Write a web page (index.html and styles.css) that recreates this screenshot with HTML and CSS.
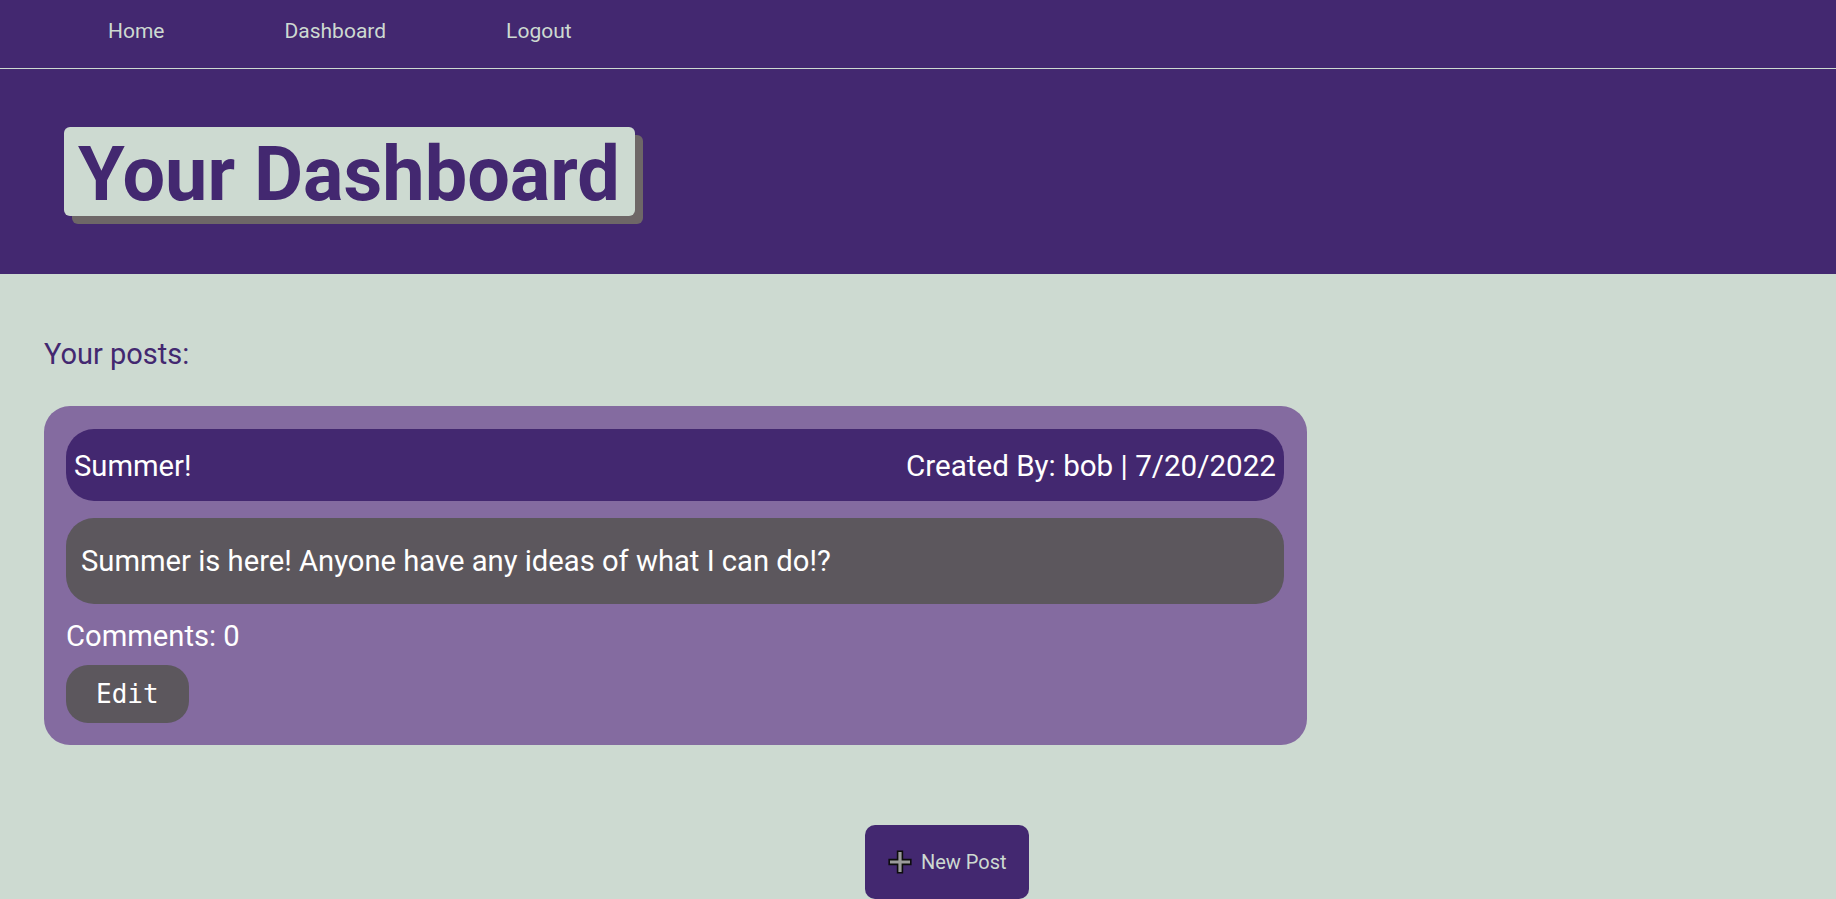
FILE: index.html
```html
<!DOCTYPE html>
<html lang="en">
<head>
<meta charset="utf-8">
<title>Your Dashboard</title>
<link rel="stylesheet" href="styles.css">
</head>
<body>
  <nav class="topnav">
    <a class="nav-link" href="#">Home</a>
    <a class="nav-link" href="#">Dashboard</a>
    <a class="nav-link" href="#">Logout</a>
  </nav>
  <header class="hero">
    <h1 class="hero-title">Your Dashboard</h1>
  </header>
  <main class="main">
    <h2 class="section-label">Your posts:</h2>
    <article class="post-card">
      <div class="post-head">
        <span class="post-title">Summer!</span>
        <span class="post-meta">Created By: bob | 7/20/2022</span>
      </div>
      <div class="post-body">Summer is here! Anyone have any ideas of what I can do!?</div>
      <div class="post-comments">Comments: 0</div>
      <button class="edit-btn">Edit</button>
    </article>
    <div class="actions">
      <button class="new-post-btn">
        <svg class="plus-icon" width="24" height="24" viewBox="0 0 24 24" aria-hidden="true">
          <path d="M9.6 1.2h4.8v8.4h8.4v4.8h-8.4v8.4H9.6v-8.4H1.2V9.6h8.4z" fill="#9b9b9b" stroke="#0d0d0d" stroke-width="1.6" stroke-linejoin="miter"/>
        </svg>
        <span>New Post</span>
      </button>
    </div>
  </main>
</body>
</html>
```

FILE: styles.css
```css
html, body {
  margin: 0;
  padding: 0;
}

body {
  background: #cddad1;
  font-family: Roboto, "Liberation Sans", sans-serif;
  overflow: hidden;
}

.topnav {
  display: flex;
  align-items: center;
  gap: 120px;
  height: 68px;
  padding-left: 108px;
  background: #432870;
  border-bottom: 1px solid #cddad1;
}

.nav-link {
  color: #cddad1;
  text-decoration: none;
  font-size: 21px;
  line-height: 24px;
  padding-bottom: 6px;
}

.hero {
  background: #432870;
  height: 205px;
  padding: 58px 0 0 64px;
  box-sizing: border-box;
}

.hero-title {
  display: inline-block;
  margin: 0;
  padding: 5px 15px 0 14px;
  height: 89px;
  box-sizing: border-box;
  background: #cddad1;
  color: #432870;
  font-size: 75.6px;
  font-weight: 700;
  line-height: 84px;
  border-radius: 6px;
  box-shadow: 8px 8px 0 #6e6767;
}

.main {
  padding: 0 44px;
}

.section-label {
  margin: 63px 0 35px;
  font-size: 29px;
  font-weight: 400;
  line-height: 34px;
  color: #432870;
}

.post-card {
  display: flex;
  flex-direction: column;
  align-items: flex-start;
  width: 1263px;
  box-sizing: border-box;
  padding: 23px 23px 22px 22px;
  background: #846ba0;
  border-radius: 26px;
  color: #fff;
  font-size: 29.2px;
  line-height: 34px;
}

.post-head {
  align-self: stretch;
  display: flex;
  justify-content: space-between;
  padding: 20px 8px 18px;
  background: #432870;
  border-radius: 28px;
}

.post-meta {
  font-size: 29.6px;
}

.post-body {
  align-self: stretch;
  margin-top: 17px;
  padding: 26px 15px;
  background: #5c575d;
  border-radius: 28px;
}

.post-comments {
  margin-top: 15px;
}

.edit-btn {
  margin-top: 12px;
  padding: 15px 30px 14px;
  border: none;
  border-radius: 22px;
  background: #5c575d;
  color: #fff;
  font-family: "DejaVu Sans Mono", "Liberation Mono", monospace;
  font-size: 26px;
  line-height: 29px;
}

.actions {
  display: flex;
  margin-top: 80px;
  padding-left: 821px;
}

.new-post-btn {
  display: flex;
  align-items: center;
  gap: 9px;
  height: 74px;
  padding: 0 22px 0 23px;
  border: none;
  border-radius: 10px;
  background: #432870;
  color: #cddad1;
  font-family: Roboto, "Liberation Sans", sans-serif;
  font-size: 20px;
  line-height: 24px;
}

.plus-icon {
  display: block;
  flex: none;
}
```
